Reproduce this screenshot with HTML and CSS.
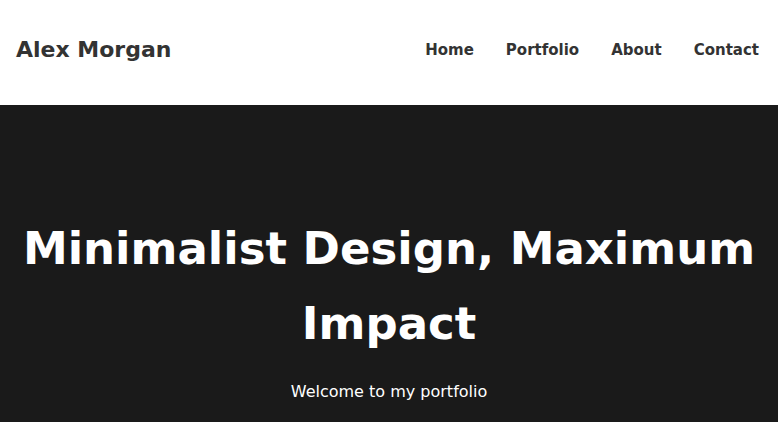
FILE: index.html
```
<!DOCTYPE html>
<html lang="en">
<head>
<meta charset="utf-8">
<title>Alex Morgan</title>
<link rel="stylesheet" href="styles.css">
</head>
<body>
<header class="site-header">
  <div class="logo">Alex Morgan</div>
  <nav class="nav">
    <a href="#">Home</a>
    <a href="#">Portfolio</a>
    <a href="#">About</a>
    <a href="#">Contact</a>
  </nav>
</header>
<section class="hero">
  <h1 class="hero-title">Minimalist Design, Maximum Impact</h1>
  <p class="hero-sub">Welcome to my portfolio</p>
</section>
</body>
</html>
```
FILE: styles.css
```
* { box-sizing: border-box; }
html, body { margin: 0; padding: 0; }
body {
  font-family: "DejaVu Sans", "Noto Sans", sans-serif;
  background: #1a1a1a;
  overflow: hidden;
}
.site-header {
  height: 105px;
  background: #fff;
  display: flex;
  align-items: center;
  justify-content: space-between;
  padding: 0 19px 6px 16px;
}
.logo {
  font-size: 22px;
  font-weight: 700;
  color: #333;
}
.nav {
  display: flex;
  gap: 32px;
}
.nav a {
  color: #333;
  text-decoration: none;
  font-size: 15px;
  font-weight: 700;
}
.hero {
  background: #1a1a1a;
  color: #fff;
  text-align: center;
  padding: 106px 16px 0;
  height: 317px;
}
.hero-title {
  margin: 0;
  font-size: 45px;
  line-height: 75px;
  font-weight: 700;
}
.hero-sub {
  margin: 19px 0 0;
  font-size: 16px;
  line-height: 24px;
}
```
